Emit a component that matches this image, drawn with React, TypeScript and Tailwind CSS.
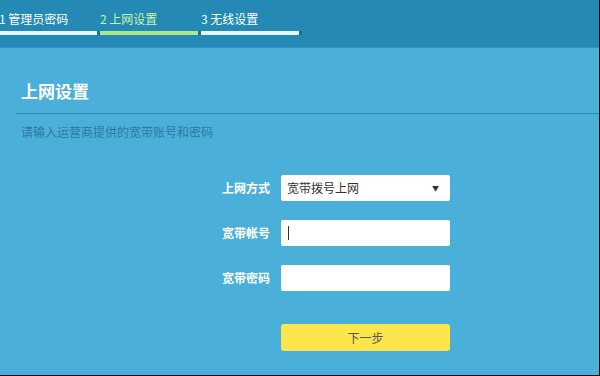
import React from "react";

const font = { fontFamily: '"Noto Sans CJK SC", "Noto Sans", sans-serif' };

function Tab({ label, bar, active }: { label: string; bar: string; active?: boolean }) {
  return (
    <div className="flex flex-col w-[101px] shrink-0">
      <div className={`text-[12px] leading-[14px] h-[14px] whitespace-nowrap ${active ? "text-[#c9f5a8]" : "text-white"}`}>{label}</div>
      <div className="mt-[5px] flex items-center h-[4px]">
        <div className={`h-[4px] flex-1 ${bar}`} />
        <div className="w-[3px] h-[4px] bg-[#1f6f94]" />
      </div>
    </div>
  );
}

function Field({ label, children }: { label: string; children: React.ReactNode }) {
  return (
    <div className="flex items-center h-[26px]">
      <div className="w-[270px] text-right pr-0 text-[12px] font-bold text-white">{label}</div>
      <div className="ml-[11px] w-[169px] h-[26px]">{children}</div>
    </div>
  );
}

export default function App() {
  return (
    <div className="w-[600px] h-[376px] overflow-hidden bg-[#4bb0d9] flex flex-col border-r border-b border-black" style={font}>
      <div className="h-[48px] bg-[#2489b4] flex items-start pt-[12px] pl-0 border-b border-[#2f95c0] shrink-0">
        <div className="flex -ml-[1px]">
          <Tab label="1 管理员密码" bar="bg-[#e4f6fb]" />
          <Tab label="2 上网设置" bar="bg-[#a9e98c]" active />
          <Tab label="3 无线设置" bar="bg-[#e4f6fb]" />
        </div>
      </div>
      <div className="pt-[32px] pl-[21px]">
        <div className="text-[17px] leading-[22px] font-bold text-white">上网设置</div>
      </div>
      <div className="mt-[11px] ml-[16px] h-px bg-[#2a86b3]" />
      <div className="pl-[21px] mt-[11px] text-[12px] leading-[14px] text-[#2b78a3]">请输入运营商提供的宽带账号和密码</div>
      <div className="mt-[36px] flex flex-col gap-[19px]">
        <Field label="上网方式">
          <div className="h-full bg-white rounded-[2px] flex items-center justify-between pl-[6px] pr-[11px] text-[12px] text-[#333]">
            <span>宽带拨号上网</span>
            <span className="text-[7px] text-[#333]">▼</span>
          </div>
        </Field>
        <Field label="宽带帐号">
          <div className="h-full bg-white rounded-[2px] flex items-center pl-[7px]">
            <div className="w-px h-[14px] bg-[#333]" />
          </div>
        </Field>
        <Field label="宽带密码">
          <div className="h-full bg-white rounded-[2px]" />
        </Field>
        <div className="flex mt-[14px]">
          <div className="w-[281px]" />
          <div className="w-[169px] h-[27px] bg-[#fde64b] rounded-[3px] flex items-center justify-center text-[12px] text-[#555]">下一步</div>
        </div>
      </div>
    </div>
  );
}
